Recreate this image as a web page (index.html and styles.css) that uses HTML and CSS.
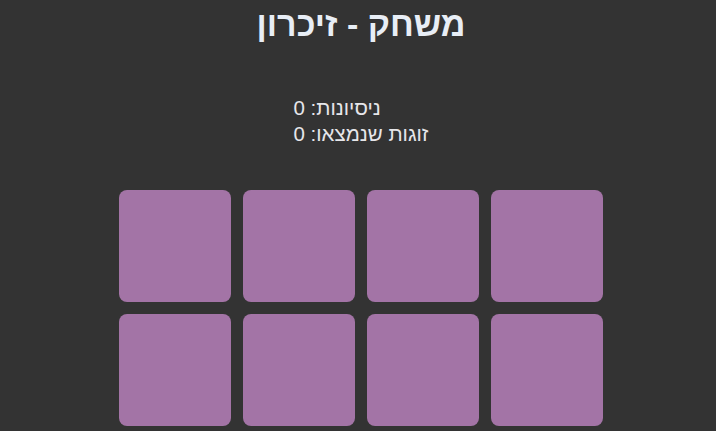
FILE: index.html
```html
<!DOCTYPE html>
<html lang="he" dir="rtl">
<head>
<meta charset="utf-8">
<title>משחק - זיכרון</title>
<link rel="stylesheet" href="styles.css">
</head>
<body>
<main class="game">
  <h1 class="title">משחק - זיכרון</h1>
  <div class="stats-wrap">
    <div class="stats">
      <div class="stat">ניסיונות: <span>0</span></div>
      <div class="stat">זוגות שנמצאו: <span>0</span></div>
    </div>
  </div>
  <div class="board">
    <div class="card"></div>
    <div class="card"></div>
    <div class="card"></div>
    <div class="card"></div>
    <div class="card"></div>
    <div class="card"></div>
    <div class="card"></div>
    <div class="card"></div>
  </div>
</main>
</body>
</html>
```
FILE: styles.css
```css
html, body {
  margin: 0;
  background: #333333;
  color: #e8eef6;
  font-family: "Liberation Sans", "DejaVu Sans", sans-serif;
  overflow: hidden;
}
.game {
  display: flex;
  flex-direction: column;
  align-items: center;
  padding: 4px 0 0 6px;
}
.title {
  margin: 0;
  font-size: 34px;
  font-weight: bold;
  line-height: 40px;
}
.stats-wrap {
  margin-top: 51px;
}
.stats {
  display: inline-block;
  text-align: left;
  font-size: 20.5px;
  line-height: 26px;
  color: #e6e6ea;
}
.board {
  margin-top: 43px;
  display: grid;
  grid-template-columns: repeat(4, 112px);
  grid-auto-rows: 112px;
  gap: 12px;
  direction: ltr;
}
.card {
  background: #a374a6;
  border-radius: 8px;
}
```
